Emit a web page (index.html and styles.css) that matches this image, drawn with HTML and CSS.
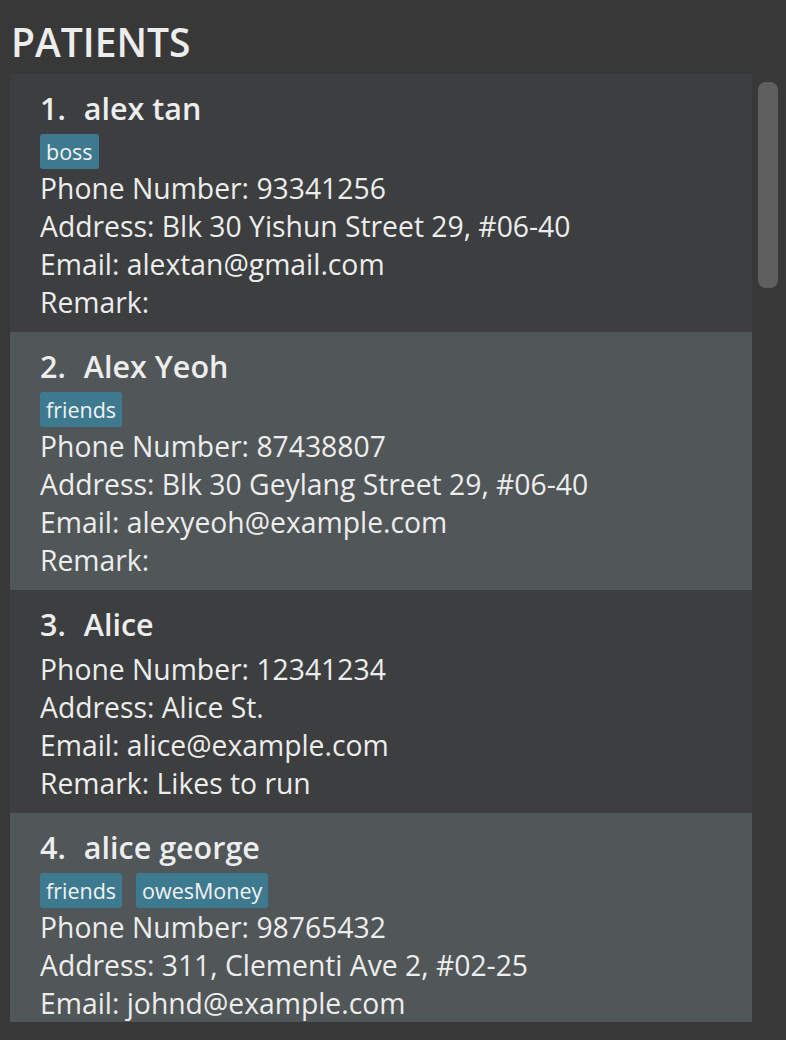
FILE: index.html
```html
<!DOCTYPE html>
<html>
<head>
<meta charset="utf-8">
<link rel="stylesheet" href="styles.css">
</head>
<body>
<div class="panel">
  <h1 class="title">PATIENTS</h1>
  <div class="list-wrap">
    <div class="list">
      <div class="card odd">
        <div class="name"><span class="idx">1.</span>alex tan</div>
        <div class="tags"><span class="tag">boss</span></div>
        <div class="line">Phone Number: 93341256</div>
        <div class="line">Address: Blk 30 Yishun Street 29, #06-40</div>
        <div class="line">Email: alextan@gmail.com</div>
        <div class="line">Remark: </div>
      </div>
      <div class="card even">
        <div class="name"><span class="idx">2.</span>Alex Yeoh</div>
        <div class="tags"><span class="tag">friends</span></div>
        <div class="line">Phone Number: 87438807</div>
        <div class="line">Address: Blk 30 Geylang Street 29, #06-40</div>
        <div class="line">Email: alexyeoh@example.com</div>
        <div class="line">Remark: </div>
      </div>
      <div class="card odd">
        <div class="name"><span class="idx">3.</span>Alice</div>
        <div class="line">Phone Number: 12341234</div>
        <div class="line">Address: Alice St.</div>
        <div class="line">Email: alice@example.com</div>
        <div class="line">Remark: Likes to run</div>
      </div>
      <div class="card even">
        <div class="name"><span class="idx">4.</span>alice george</div>
        <div class="tags"><span class="tag">friends</span><span class="tag">owesMoney</span></div>
        <div class="line">Phone Number: 98765432</div>
        <div class="line">Address: 311, Clementi Ave 2, #02-25</div>
        <div class="line">Email: johnd@example.com</div>
        <div class="line">Remark: </div>
      </div>
    </div>
    <div class="track"><div class="thumb"></div></div>
  </div>
</div>
</body>
</html>
```
FILE: styles.css
```css
html, body {
  margin: 0;
  padding: 0;
  background: #383838;
  height: 100%;
  overflow: hidden;
}
body {
  font-family: "Open Sans", "Noto Sans", sans-serif;
  color: #ededed;
}
.panel {
  padding: 0 0 0 10px;
}
.title {
  margin: 0;
  padding: 20px 0 0 1px;
  height: 74px;
  box-sizing: border-box;
  font-size: 39px;
  line-height: 44px;
  font-weight: 600;
  color: #ededed;
}
.list-wrap {
  display: flex;
}
.list {
  width: 742px;
  height: 948px;
  overflow: hidden;
  background: #3c3e3f;
}
.card {
  padding: 14px 40px 11px 30px;
  display: flex;
  flex-direction: column;
}
.odd { background: #3c3e3f; }
.even { background: #515658; }
.name {
  height: 40px;
  line-height: 40px;
  font-size: 30.5px;
  font-weight: 600;
  margin-bottom: 6px;
  white-space: nowrap;
}
.idx {
  margin-right: 18px;
}
.tags {
  display: flex;
  gap: 14px;
  height: 35px;
}
.tag {
  background: #3e7a8f;
  border-radius: 3px;
  font-size: 21.5px;
  line-height: 35px;
  padding: 0 6px;
  color: #f2f2f2;
}
.line {
  height: 38px;
  line-height: 38px;
  font-size: 28.3px;
  white-space: nowrap;
}
.track {
  width: 34px;
  padding: 8px 8px 0 6px;
  box-sizing: border-box;
}
.thumb {
  width: 20px;
  height: 206px;
  background: #5f5f5f;
  border-radius: 8px;
}
```
